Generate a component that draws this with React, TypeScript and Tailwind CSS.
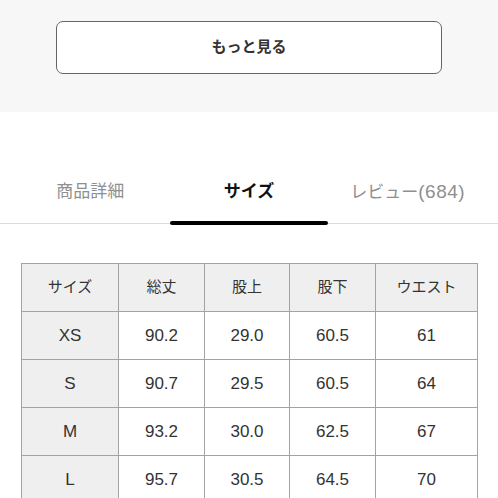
import React from "react"

const font = "font-['Liberation_Sans','Noto_Sans_CJK_JP',sans-serif]"

const headers = ["サイズ", "総丈", "股上", "股下", "ウエスト"]
const widths = ["w-[97px]", "w-[86px]", "w-[85px]", "w-[86px]", "w-[102px]"]

const rows = [
    ["XS", "90.2", "29.0", "60.5", "61"],
    ["S", "90.7", "29.5", "60.5", "64"],
    ["M", "93.2", "30.0", "62.5", "67"],
    ["L", "95.7", "30.5", "64.5", "70"],
]

export default function App() {
    return (
        <div className={`w-[498px] h-[498px] overflow-hidden bg-white ${font}`}>
            {/* more button */}
            <div className="bg-[#f7f7f7] h-[112px] pt-[21px]">
                <button className="mx-auto flex w-[386px] h-[53px] items-center justify-center rounded-[7px] border-[1.5px] border-[#666] bg-white text-[15px] font-bold text-[#333]">
                    もっと見る
                </button>
            </div>

            {/* tabs */}
            <div className="mt-[62px] border-b border-[#dcdcdc]">
                <div className="grid grid-cols-3 px-[11px]">
                    <div className="text-center text-[17px] leading-[36px] text-[#8f8f8f]">商品詳細</div>
                    <div className="flex flex-col items-center">
                        <div className="text-[17px] leading-[36px] font-bold text-[#111]">サイズ</div>
                        <div className="mb-[-2px] mt-[11px] h-[4px] w-full rounded-full bg-black" />
                    </div>
                    <div className="text-center text-[17px] leading-[36px] text-[#8f8f8f]">
                        レビュー<span className="text-[19px] tracking-[0.5px]">(684)</span>
                    </div>
                </div>
            </div>

            {/* size table */}
            <div className="px-[21px] pt-[39px]">
                <table className="w-[456px] table-fixed border-collapse text-[#333]">
                    <thead>
                        <tr className="bg-[#efefef]">
                            {headers.map((h, i) => (
                                <th key={h} className={`${widths[i]} h-[48px] border border-[#a3a3a3] text-[15px] font-normal`}>
                                    {h}
                                </th>
                            ))}
                        </tr>
                    </thead>
                    <tbody>
                        {rows.map((r) => (
                            <tr key={r[0]}>
                                {r.map((c, i) => (
                                    <td
                                        key={i}
                                        className={`h-[48px] border border-[#a3a3a3] text-center text-[17px] ${i === 0 ? "bg-[#efefef]" : "bg-white"}`}
                                    >
                                        {c}
                                    </td>
                                ))}
                            </tr>
                        ))}
                    </tbody>
                </table>
            </div>
        </div>
    )
}
